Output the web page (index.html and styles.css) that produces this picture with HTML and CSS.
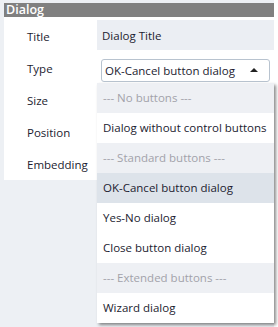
FILE: index.html
```html
<!DOCTYPE html>
<html>
<head>
<meta charset="utf-8">
<link rel="stylesheet" href="styles.css">
</head>
<body>
<div class="panel">
  <div class="header">Dialog</div>
  <div class="grid">
    <div class="label">Title</div>
    <div class="value"><div class="readonly">Dialog Title</div></div>
    <div class="label">Type</div>
    <div class="value"><div class="select"><span>OK-Cancel button dialog</span><span class="arrow"></span></div></div>
    <div class="label">Size</div>
    <div class="value"></div>
    <div class="label">Position</div>
    <div class="value"></div>
    <div class="label">Embedding</div>
    <div class="value"></div>
  </div>
  <ul class="dropdown">
    <li class="group">--- No buttons ---</li>
    <li>Dialog without control buttons</li>
    <li class="group">--- Standard buttons ---</li>
    <li class="selected">OK-Cancel button dialog</li>
    <li>Yes-No dialog</li>
    <li>Close button dialog</li>
    <li class="group">--- Extended buttons ---</li>
    <li>Wizard dialog</li>
  </ul>
</div>
</body>
</html>
```
FILE: styles.css
```css
html, body {
  margin: 0;
  padding: 0;
  background: #ffffff;
}
body {
  font-family: "Open Sans", "Noto Sans", sans-serif;
  font-size: 11.5px;
  color: #1c1c30;
}
.panel {
  position: relative;
  width: 274px;
  height: 327px;
  box-sizing: border-box;
  padding: 3px 0 0 4px;
  background: #edf0f4;
}
.header {
  height: 14px;
  line-height: 14px;
  background: #808080;
  color: #ffffff;
  font-weight: 600;
  font-size: 12.5px;
  padding-left: 2px;
}
.grid {
  display: grid;
  grid-template-columns: 93px 177px;
  grid-auto-rows: 32px;
  background: #ffffff;
  padding-top: 3px;
}
.label {
  padding-left: 23px;
  display: flex;
  align-items: center;
}
.value {
  display: flex;
  align-items: center;
}
.readonly {
  align-self: flex-start;
  height: 30px;
  width: 100%;
  background: #ebeef3;
  padding-left: 5px;
  display: flex;
  align-items: center;
  box-sizing: border-box;
}
.select {
  margin-left: 4px;
  width: 169px;
  height: 23px;
  box-sizing: border-box;
  border: 1px solid #b8c3cf;
  border-radius: 3px;
  background: #ffffff;
  display: flex;
  align-items: center;
  justify-content: space-between;
  padding: 0 11px 0 3px;
  margin-top: 4px;
}
.arrow {
  width: 0;
  height: 0;
  border-left: 4px solid transparent;
  border-right: 4px solid transparent;
  border-bottom: 4px solid #222;
}
.dropdown {
  position: absolute;
  left: 97px;
  top: 83px;
  width: 177px;
  margin: 0;
  padding: 0;
  list-style: none;
  background: #ffffff;
  box-shadow: 2px 2px 3px rgba(0, 0, 0, 0.45);
}
.dropdown li {
  height: 30px;
  line-height: 30px;
  padding-left: 6px;
  white-space: nowrap;
}
.dropdown li.group {
  background: #eef0f4;
  color: #a2a2aa;
}
.dropdown li.selected {
  background: #dde3ea;
}
```
